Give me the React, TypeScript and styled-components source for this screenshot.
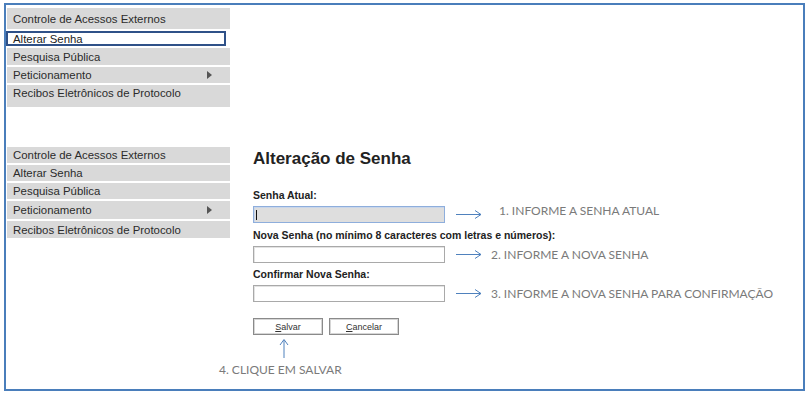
import styled, { createGlobalStyle } from "styled-components";

const GlobalStyle = createGlobalStyle`
	body {
		margin: 0;
		background: #fff;
		font-family: "Liberation Sans", Arial, sans-serif;
	}
`;

const Frame = styled.div`
	box-sizing: border-box;
	width: 801px;
	height: 388px;
	margin: 3px 0 0 4px;
	padding: 3px 0 0 1px;
	border: 2px solid #4a7ebb;
`;

const Menu = styled.ul`
	list-style: none;
	margin: 0;
	padding: 0;
	width: 223px;
	display: flex;
	flex-direction: column;
	gap: 2px;
`;

const MenuItem = styled.li<{ $h: number; $top?: boolean; $active?: boolean }>`
	position: relative;
	box-sizing: border-box;
	height: ${(p) => p.$h}px;
	display: flex;
	align-items: ${(p) => (p.$top ? "flex-start" : "center")};
	padding: ${(p) => (p.$top ? "2px" : "0")} 0 0 6px;
	background: #d9d9d9;
	color: #2b2b2b;
	font-size: 11.4px;
	white-space: nowrap;

	${(p) =>
		p.$active &&
		`
		width: 220px;
		margin-left: -1px;
		padding-left: 5px;
		background: #fff;
		border: 2px solid #2f5188;
		color: #222;
	`}
`;

const SubArrow = styled.span`
	position: absolute;
	left: 200px;
	top: 50%;
	margin-top: -4px;
	width: 0;
	height: 0;
	border-top: 4px solid transparent;
	border-bottom: 4px solid transparent;
	border-left: 5px solid #555;
`;

const Row = styled.div`
	display: flex;
	align-items: flex-start;
	margin-top: 40px;
`;

const Form = styled.div`
	margin-left: 23px;
	padding-top: 2px;
	display: flex;
	flex-direction: column;
`;

const Title = styled.h1`
	margin: 0 0 20px;
	font-size: 17px;
	line-height: 20px;
	font-weight: bold;
	color: #222;
`;

const Label = styled.label<{ $gap: number }>`
	display: block;
	margin-top: ${(p) => p.$gap}px;
	margin-bottom: 4px;
	font-size: 10.5px;
	line-height: 13px;
	font-weight: bold;
	color: #222;
`;

const InputRow = styled.div`
	display: flex;
	align-items: center;
`;

const FakeInput = styled.div<{ $focus?: boolean }>`
	position: relative;
	box-sizing: border-box;
	width: 192px;
	height: 17px;
	border: 1px solid ${(p) => (p.$focus ? "#8eaedc" : "#a9a9a9")};
	background: ${(p) => (p.$focus ? "#dedede" : "#fff")};
	box-shadow: inset 1px 1px 0 ${(p) => (p.$focus ? "#c9d6ea" : "#e3e3e3")};

	${(p) =>
		p.$focus &&
		`
		&::after {
			content: "";
			position: absolute;
			left: 2px;
			top: 3px;
			width: 1px;
			height: 10px;
			background: #111;
		}
	`}
`;

const Note = styled.span<{ $shift: number; $lift?: number }>`
	margin-left: ${(p) => p.$shift}px;
	margin-top: ${(p) => -(p.$lift ?? 0) * 2}px;
	font-family: Lato, "Open Sans", sans-serif;
	font-size: 12px;
	color: #7a7a7a;
	white-space: nowrap;
`;

const Buttons = styled.div`
	display: flex;
	gap: 6px;
	margin-top: 16px;
`;

const Button = styled.button`
	box-sizing: border-box;
	width: 70px;
	height: 17px;
	padding: 0;
	border: 1px solid #8a8a8a;
	box-shadow: inset 0 0 0 1px #d6d6d6;
	background: #fff;
	color: #333;
	font-family: "Liberation Sans", Arial, sans-serif;
	font-size: 9px;

	u {
		text-decoration: underline;
	}
`;

const Step = styled.div`
	display: flex;
	flex-direction: column;
	align-items: flex-start;
`;

const UpArrow = styled.svg`
	display: block;
	margin: 4px 0 0 26px;
`;

const StepNote = styled.span`
	margin: 4px 0 0 -34px;
	font-family: Lato, "Open Sans", sans-serif;
	font-size: 12px;
	color: #7a7a7a;
	white-space: nowrap;
`;

const RightArrow = () => (
	<svg width={26} height={9} viewBox="0 0 26 9" style={{ marginLeft: 11, flex: "none" }}>
		<g fill="none" stroke="#4f81bd" strokeWidth={1}>
			<line x1={0} y1={4.5} x2={25} y2={4.5} />
			<polyline points="19,0.5 25,4.5 19,8.5" />
		</g>
	</svg>
);

const topItems = [
	{ label: "Controle de Acessos Externos", h: 21 },
	{ label: "Alterar Senha", h: 15, active: true },
	{ label: "Pesquisa Pública", h: 17 },
	{ label: "Peticionamento", h: 16, sub: true },
	{ label: "Recibos Eletrônicos de Protocolo", h: 22, top: true },
];

const sideItems = [
	{ label: "Controle de Acessos Externos", h: 16 },
	{ label: "Alterar Senha", h: 16 },
	{ label: "Pesquisa Pública", h: 16 },
	{ label: "Peticionamento", h: 18, sub: true },
	{ label: "Recibos Eletrônicos de Protocolo", h: 17 },
];

type Item = { label: string; h: number; active?: boolean; sub?: boolean; top?: boolean };

const MenuList = ({ items }: { items: Item[] }) => (
	<Menu>
		{items.map((it) => (
			<MenuItem key={it.label} $h={it.h} $active={it.active} $top={it.top}>
				{it.label}
				{it.sub && <SubArrow />}
			</MenuItem>
		))}
	</Menu>
);

export default function App() {
	return (
		<>
			<GlobalStyle />
			<Frame>
				<MenuList items={topItems} />
				<Row>
					<MenuList items={sideItems} />
					<Form>
						<Title>Alteração de Senha</Title>

						<Label $gap={0}>Senha Atual:</Label>
						<InputRow>
							<FakeInput $focus />
							<RightArrow />
							<Note $shift={17} $lift={4}>1. INFORME A SENHA ATUAL</Note>
						</InputRow>

						<Label $gap={6}>Nova Senha (no mínimo 8 caracteres com letras e números):</Label>
						<InputRow>
							<FakeInput />
							<RightArrow />
							<Note $shift={9}>2. INFORME A NOVA SENHA</Note>
						</InputRow>

						<Label $gap={5}>Confirmar Nova Senha:</Label>
						<InputRow>
							<FakeInput />
							<RightArrow />
							<Note $shift={9}>3. INFORME A NOVA SENHA PARA CONFIRMAÇÃO</Note>
						</InputRow>

						<Buttons>
							<Button type="button">
								<u>S</u>alvar
							</Button>
							<Button type="button">
								<u>C</u>ancelar
							</Button>
						</Buttons>

						<Step>
							<UpArrow width={10} height={19} viewBox="0 0 10 19">
								<g fill="none" stroke="#4f81bd" strokeWidth={1}>
									<line x1={5} y1={1} x2={5} y2={19} />
									<polyline points="1,6 5,0.5 9,6" />
								</g>
							</UpArrow>
							<StepNote>4. CLIQUE EM SALVAR</StepNote>
						</Step>
					</Form>
				</Row>
			</Frame>
		</>
	);
}
